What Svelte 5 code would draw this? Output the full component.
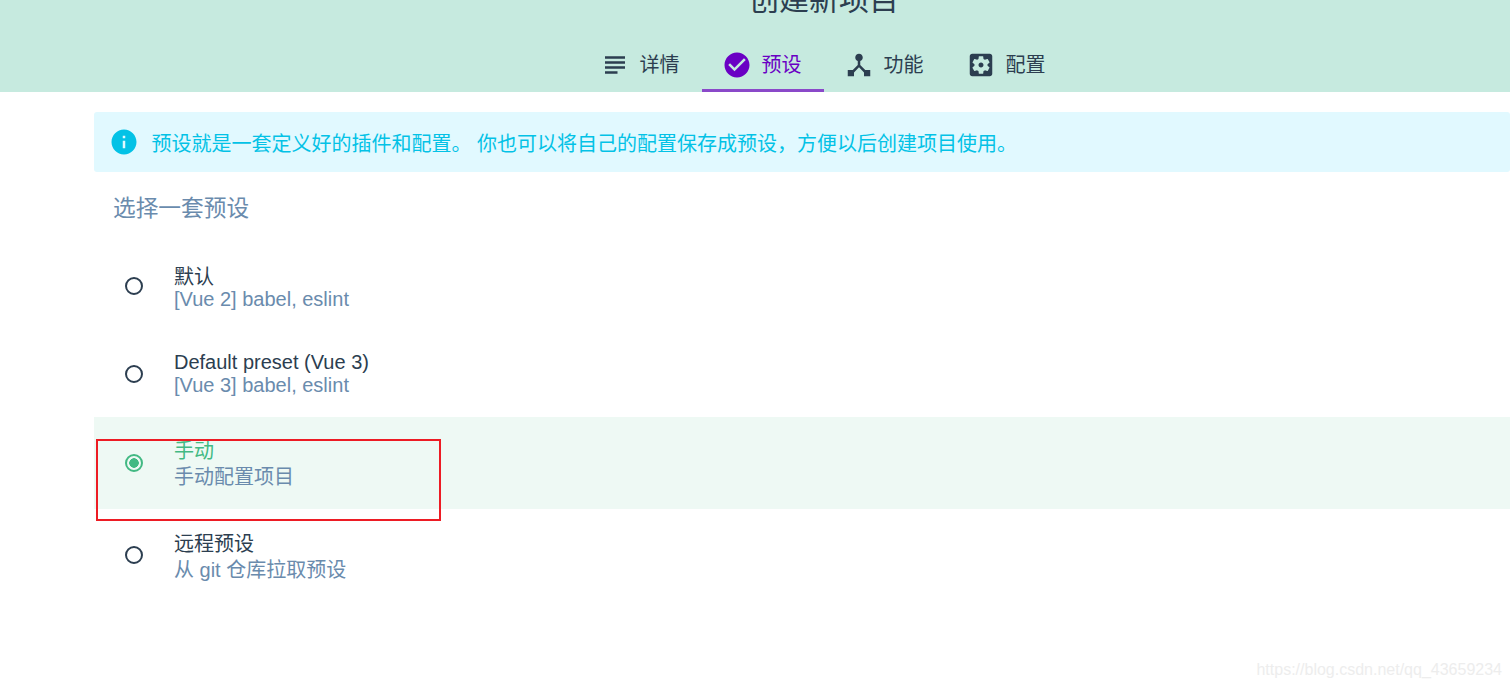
<script>
	const tabs = [
		{
			label: '详情',
			icon: 'M14 17H4v2h10v-2zm6-8H4v2h16V9zM4 15h16v-2H4v2zM4 5v2h16V5H4z'
		},
		{
			label: '预设',
			active: true,
			icon: 'M12 2C6.48 2 2 6.48 2 12s4.48 10 10 10 10-4.48 10-10S17.52 2 12 2zm-2 15l-5-5 1.41-1.41L10 14.17l7.59-7.59L19 8l-9 9z'
		},
		{
			label: '功能',
			icon: 'M17 16l-4-4V8.82C14.16 8.4 15 7.3 15 6c0-1.66-1.34-3-3-3S9 4.34 9 6c0 1.3.84 2.4 2 2.82V12l-4 4H3v5h5v-3.05l4-4.2 4 4.2V21h5v-5h-4z'
		},
		{
			label: '配置',
			icon: 'M12 10c-1.1 0-2 .9-2 2s.9 2 2 2 2-.9 2-2-.9-2-2-2zm7-7H5c-1.1 0-2 .9-2 2v14c0 1.1.9 2 2 2h14c1.1 0 2-.9 2-2V5c0-1.1-.9-2-2-2zm-1.75 9c0 .23-.02.46-.05.68l1.48 1.16c.13.11.17.3.08.45l-1.4 2.42c-.09.15-.27.21-.43.15l-1.74-.7c-.36.28-.76.51-1.18.69l-.26 1.85c-.03.17-.18.3-.35.3h-2.8c-.17 0-.32-.13-.35-.29l-.26-1.85c-.43-.18-.82-.41-1.18-.69l-1.74.7c-.16.06-.34 0-.43-.15l-1.4-2.42c-.09-.15-.05-.34.08-.45l1.48-1.16c-.03-.23-.05-.46-.05-.69 0-.23.02-.46.05-.68l-1.48-1.16c-.13-.11-.17-.3-.08-.45l1.4-2.42c.09-.15.27-.21.43-.15l1.74.7c.36-.28.76-.51 1.18-.69l.26-1.85c.03-.17.18-.3.35-.3h2.8c.17 0 .32.13.35.29l.26 1.85c.43.18.82.41 1.18.69l1.74-.7c.16-.06.34 0 .43.15l1.4 2.42c.09.15.05.34-.08.45l-1.48 1.16c.03.23.05.46.05.69z'
		}
	];

	const presets = [
		{ name: '默认', desc: '[Vue 2] babel, eslint', first: true },
		{ name: 'Default preset (Vue 3)', desc: '[Vue 3] babel, eslint' },
		{ name: '手动', desc: '手动配置项目', selected: true, tall: true },
		{ name: '远程预设', desc: '从 git 仓库拉取预设', tall: true }
	];
</script>

<div class="page">
	<header class="top">
		<h1 class="title">创建新项目</h1>
		<nav class="tabs">
			{#each tabs as tab}
				<div class="tab" class:active={tab.active}>
					<svg viewBox="0 0 24 24" width="30" height="30"><path d={tab.icon} /></svg>
					<span>{tab.label}</span>
				</div>
			{/each}
		</nav>
	</header>

	<main class="content">
		<div class="alert">
			<svg viewBox="0 0 24 24" width="30" height="30">
				<path d="M12 2C6.48 2 2 6.48 2 12s4.48 10 10 10 10-4.48 10-10S17.52 2 12 2zm1 15h-2v-6h2v6zm0-8h-2V7h2v2z" />
			</svg>
			<span>预设就是一套定义好的插件和配置。 你也可以将自己的配置保存成预设，方便以后创建项目使用。</span>
		</div>

		<h2 class="heading">选择一套预设</h2>

		<div class="list">
			{#each presets as preset}
				<div class="row" class:selected={preset.selected} class:tall={preset.tall} class:first={preset.first}>
					<span class="radio"></span>
					<div class="info">
						<div class="name">{preset.name}</div>
						<div class="desc">{preset.desc}</div>
					</div>
				</div>
			{/each}
		</div>
	</main>

	<div class="mark"></div>
	<div class="watermark">https://blog.csdn.net/qq_43659234</div>
</div>

<style>
	:global(body) {
		margin: 0;
		background: #fff;
	}

	.page {
		position: relative;
		height: 688px;
		overflow: hidden;
		color: #2c3e50;
		font-family: 'Liberation Sans', 'Noto Sans CJK SC', sans-serif;
		font-size: 20px;
	}

	.top {
		height: 92px;
		padding-left: 138px;
		background: #c6eadf;
		overflow: hidden;
		box-sizing: border-box;
	}

	.title {
		margin: -20px 0 0;
		height: 60px;
		font-size: 30px;
		line-height: 40px;
		font-weight: 400;
		text-align: center;
	}

	.tabs {
		display: flex;
		justify-content: center;
	}

	.tab {
		display: flex;
		align-items: center;
		gap: 10px;
		width: 122px;
		height: 52px;
		padding: 1px 0 0 19.5px;
		box-sizing: border-box;
		line-height: 26px;
		border-bottom: 3px solid transparent;
	}

	.tab svg {
		fill: #2c3e50;
		flex: none;
	}

	.tab.active {
		color: #6a00c4;
		border-bottom-color: #8a49c9;
	}

	.tab.active svg {
		fill: #6a00c4;
	}

	.content {
		margin: 20px 0 0 94px;
	}

	.alert {
		display: flex;
		align-items: center;
		gap: 13px;
		height: 60px;
		padding-left: 15px;
		background: #e1f9ff;
		border-radius: 3px;
		color: #03c2e6;
		line-height: 26px;
		white-space: nowrap;
	}

	.alert svg {
		fill: #03c2e6;
		flex: none;
	}

	.alert span {
		margin-top: 3px;
		margin-left: -0.5px;
	}

	.heading {
		margin: 0;
		height: 69px;
		padding: 20px 0 0 19px;
		box-sizing: border-box;
		font-size: 22.7px;
		line-height: 32px;
		font-weight: 400;
		color: #6a8bad;
	}

	.row {
		display: flex;
		align-items: center;
		gap: 31px;
		height: 88px;
		padding-left: 31px;
		box-sizing: border-box;
	}

	.row.tall {
		height: 92px;
	}

	.radio {
		width: 18px;
		height: 18px;
		margin-top: 2px;
		border: 2px solid #2c3e50;
		border-radius: 50%;
		box-sizing: border-box;
		flex: none;
	}

	.tall .radio {
		margin-top: 0;
	}

	.info {
		padding-top: 2px;
	}

	.first .info {
		padding-top: 6px;
	}

	.first .desc {
		margin-top: -1px;
	}

	.tall .info {
		padding-top: 6px;
	}

	.name,
	.desc {
		line-height: 23px;
	}

	.tall .desc {
		line-height: 28px;
	}

	.desc {
		color: #6a8bad;
	}

	.selected {
		background: #eef9f4;
	}

	.selected .name {
		color: #42b983;
	}

	.selected .radio {
		border-color: #42b983;
		background: radial-gradient(circle, #42b983 0 4.5px, transparent 5px);
	}

	.selected .info {
		margin-top: -1px;
	}

	.mark {
		position: absolute;
		left: 96px;
		top: 439px;
		width: 345px;
		height: 82px;
		border: 2px solid #ed1c24;
		box-sizing: border-box;
	}

	.watermark {
		position: absolute;
		right: 8px;
		top: 660px;
		font-size: 16px;
		line-height: 19px;
		color: #ededed;
	}
</style>
